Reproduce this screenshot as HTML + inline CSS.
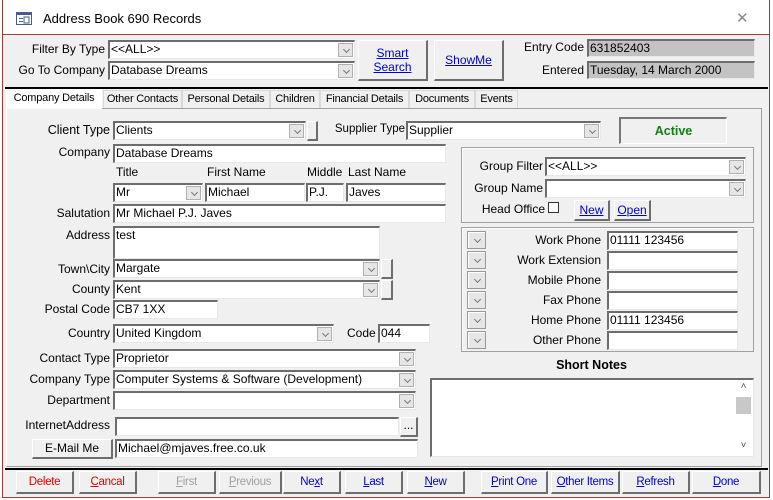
<!DOCTYPE html>
<html><head><meta charset="utf-8"><style>
*{box-sizing:border-box;margin:0;padding:0}
body{width:773px;height:500px;background:#fff;font-family:"Liberation Sans",sans-serif;font-size:12px;color:#000;position:relative;overflow:hidden}
.win{position:absolute;left:2px;top:0;width:768px;height:498px;border:1px solid #a33a3a;border-top:none;background:#f0f0f0}
.tb{position:absolute;left:0;top:0;width:766px;height:35px;background:#fff;border-bottom:1px solid #a33a3a}
.a{position:absolute}
.l{position:absolute;white-space:nowrap;text-align:right}
.f{position:absolute;background:#fff;border-top:2px solid #6d6d6d;border-left:2px solid #6d6d6d;border-bottom:1px solid #e8e8e8;border-right:1px solid #e8e8e8;padding-left:1px;line-height:15px;white-space:nowrap;overflow:hidden}
.g{background:#c3c3c3}
.dd{position:absolute;right:1px;top:1px;width:15px;height:14px;background:#e6e6e6;border:1px solid #b0b0b0}
.dd::after,.pb::after{content:"";position:absolute;left:5px;top:3px;width:4px;height:4px;border-right:1px solid #777;border-bottom:1px solid #777;transform:rotate(45deg)}
.b{position:absolute;background:#f0f0f0;border-top:1px solid #fff;border-left:1px solid #fff;border-right:2px solid #6d6d6d;border-bottom:2px solid #6d6d6d;text-align:center;white-space:nowrap}
.u{color:#00c;text-decoration:underline}
.tab{position:absolute;top:90px;height:18px;border:1px solid #d9d9d9;border-bottom:none;line-height:17px;text-align:center;background:#f0f0f0;white-space:nowrap;font-size:11px;letter-spacing:-0.2px;overflow:hidden}
.box{position:absolute;border:1px solid #a0a0a0;box-shadow:1px 1px 0 #fff inset}
.bt{position:absolute;top:471px;height:23px;background:#f0f0f0;border-top:1px solid #fff;border-left:1px solid #fff;border-right:2px solid #6d6d6d;border-bottom:2px solid #6d6d6d;text-align:center;line-height:20px;color:#00c;font-size:11.5px;letter-spacing:-0.3px;white-space:nowrap}
.pb{position:absolute;left:467px;width:19px;height:18px;background:#e6e6e6;border:1px solid #999;box-shadow:1px 1px 0 #fff inset}
.pb::after{left:7px;top:5px}
</style></head><body>
<div class="win">
<div class="tb">
<svg class="a" style="left:13px;top:12px" width="16" height="13"><rect x="0.5" y="0.5" width="15" height="12" fill="#fff" stroke="#4a5c8c"/><rect x="1" y="1" width="14" height="2" fill="#4a5c8c"/><rect x="3" y="6" width="4" height="1" fill="#4a5c8c"/><rect x="3" y="9" width="4" height="1" fill="#4a5c8c"/><rect x="8" y="5" width="5" height="6" fill="none" stroke="#4a5c8c"/></svg>
<div class="a" style="left:40px;top:11px;font-size:13px">Address Book 690 Records</div>
<div class="a" style="left:733px;top:9px;font-size:15px;color:#888">✕</div>
</div>
</div>
<div class="l" style="left:10px;top:42px;width:95px">Filter By Type</div>
<div class="f" style="left:108px;top:40px;width:247px;height:19px">&lt;&lt;ALL&gt;&gt;<div class="dd"></div></div>
<div class="l" style="left:10px;top:63px;width:95px">Go To Company</div>
<div class="f" style="left:108px;top:61px;width:247px;height:19px">Database Dreams<div class="dd"></div></div>
<div class="b" style="left:358px;top:40px;width:70px;height:41px;padding-top:5px;line-height:14px"><span class="u">Smart<br>Search</span></div>
<div class="b" style="left:434px;top:40px;width:70px;height:41px;line-height:38px"><span class="u">ShowMe</span></div>
<div class="l" style="left:500px;top:40px;width:84px">Entry Code</div>
<div class="f g" style="left:587px;top:39px;width:168px;height:18px">631852403</div>
<div class="l" style="left:500px;top:63px;width:84px">Entered</div>
<div class="f g" style="left:587px;top:61px;width:168px;height:18px">Tuesday, 14 March 2000</div>
<div class="a" style="left:5px;top:87px;width:763px;height:2px;background:#000"></div>

<div class="a" style="left:6px;top:108px;width:756px;height:359px;border:1px solid #a0a0a0;border-left:1px solid #fff"></div>
<div class="tab" style="left:6px;width:96px;background:#fff;top:89px;height:20px;border-color:#fff">Company Details</div>
<div class="tab" style="left:103px;width:79px">Other Contacts</div>
<div class="tab" style="left:182px;width:88px">Personal Details</div>
<div class="tab" style="left:270px;width:50px">Children</div>
<div class="tab" style="left:320px;width:89px">Financial Details</div>
<div class="tab" style="left:409px;width:66px">Documents</div>
<div class="tab" style="left:475px;width:43px">Events</div>

<div class="l" style="left:10px;top:123px;width:100px;font-size:12.5px">Client Type</div>
<div class="f" style="left:113px;top:121px;width:193px;height:19px">Clients<div class="dd"></div></div>
<div class="b" style="left:307px;top:121px;width:11px;height:20px"></div>
<div class="l" style="left:325px;top:123px;width:80px;font-size:11.5px">Supplier Type</div>
<div class="f" style="left:406px;top:121px;width:195px;height:19px">Supplier<div class="dd"></div></div>
<div class="a" style="left:619px;top:117px;width:108px;height:27px;border-top:2px solid #777;border-left:2px solid #777;border-bottom:1px solid #fff;border-right:1px solid #fff;text-align:center;line-height:24px;color:#118011;font-weight:bold;font-size:12.5px">Active</div>

<div class="l" style="left:10px;top:145px;width:100px">Company</div>
<div class="f" style="left:113px;top:144px;width:333px;height:19px">Database Dreams</div>
<div class="a" style="left:116px;top:165px">Title</div>
<div class="a" style="left:207px;top:165px">First Name</div>
<div class="a" style="left:307px;top:165px">Middle</div>
<div class="a" style="left:348px;top:165px">Last Name</div>
<div class="f" style="left:113px;top:183px;width:90px;height:19px">Mr<div class="dd"></div></div>
<div class="f" style="left:205px;top:183px;width:100px;height:19px">Michael</div>
<div class="f" style="left:306px;top:183px;width:38px;height:19px">P.J.</div>
<div class="f" style="left:346px;top:183px;width:100px;height:19px">Javes</div>
<div class="l" style="left:10px;top:206px;width:100px">Salutation</div>
<div class="f" style="left:113px;top:204px;width:333px;height:19px">Mr Michael P.J. Javes</div>
<div class="l" style="left:10px;top:228px;width:100px">Address</div>
<div class="f" style="left:113px;top:226px;width:267px;height:33px">test</div>
<div class="l" style="left:10px;top:262px;width:100px">Town\City</div>
<div class="f" style="left:113px;top:259px;width:267px;height:19px">Margate<div class="dd"></div></div>
<div class="b" style="left:381px;top:259px;width:12px;height:20px"></div>
<div class="l" style="left:10px;top:282px;width:100px">County</div>
<div class="f" style="left:113px;top:280px;width:267px;height:19px">Kent<div class="dd"></div></div>
<div class="b" style="left:381px;top:280px;width:12px;height:20px"></div>
<div class="l" style="left:10px;top:302px;width:100px">Postal Code</div>
<div class="f" style="left:113px;top:300px;width:105px;height:19px">CB7 1XX</div>
<div class="l" style="left:10px;top:326px;width:100px">Country</div>
<div class="f" style="left:113px;top:324px;width:221px;height:19px">United Kingdom<div class="dd"></div></div>
<div class="a" style="left:347px;top:326px">Code</div>
<div class="f" style="left:378px;top:324px;width:52px;height:19px">044</div>
<div class="l" style="left:10px;top:351px;width:100px">Contact Type</div>
<div class="f" style="left:113px;top:349px;width:303px;height:19px">Proprietor<div class="dd"></div></div>
<div class="l" style="left:10px;top:372px;width:100px">Company Type</div>
<div class="f" style="left:113px;top:370px;width:303px;height:19px">Computer Systems &amp; Software (Development)<div class="dd"></div></div>
<div class="l" style="left:10px;top:393px;width:100px">Department</div>
<div class="f" style="left:113px;top:391px;width:303px;height:19px"><div class="dd"></div></div>
<div class="l" style="left:10px;top:418px;width:100px">InternetAddress</div>
<div class="f" style="left:115px;top:417px;width:284px;height:19px"></div>
<div class="b" style="left:400px;top:417px;width:18px;height:20px;line-height:14px">...</div>
<div class="b" style="left:32px;top:439px;width:81px;height:20px;line-height:17px">E-Mail Me</div>
<div class="f" style="left:115px;top:439px;width:303px;height:19px">Michael@mjaves.free.co.uk</div>

<div class="box" style="left:461px;top:147px;width:293px;height:76px"></div>
<div class="l" style="left:460px;top:159px;width:83px">Group Filter</div>
<div class="f" style="left:545px;top:157px;width:201px;height:19px">&lt;&lt;ALL&gt;&gt;<div class="dd"></div></div>
<div class="l" style="left:460px;top:181px;width:83px">Group Name</div>
<div class="f" style="left:545px;top:179px;width:201px;height:19px"><div class="dd"></div></div>
<div class="l" style="left:460px;top:202px;width:85px">Head Office</div>
<div class="a" style="left:548px;top:202px;width:11px;height:11px;border:1px solid #333;background:#fff"></div>
<div class="b" style="left:574px;top:200px;width:36px;height:21px;line-height:18px"><span class="u">New</span></div>
<div class="b" style="left:614px;top:200px;width:37px;height:21px;line-height:18px"><span class="u">Open</span></div>

<div class="box" style="left:461px;top:227px;width:293px;height:125px"></div>
<div class="pb" style="top:231px"></div><div class="l" style="left:490px;top:233px;width:111px">Work Phone</div><div class="f" style="left:607px;top:231px;width:131px;height:19px">01111 123456</div>
<div class="pb" style="top:251px"></div><div class="l" style="left:490px;top:253px;width:111px">Work Extension</div><div class="f" style="left:607px;top:251px;width:131px;height:19px"></div>
<div class="pb" style="top:271px"></div><div class="l" style="left:490px;top:273px;width:111px">Mobile Phone</div><div class="f" style="left:607px;top:271px;width:131px;height:19px"></div>
<div class="pb" style="top:291px"></div><div class="l" style="left:490px;top:293px;width:111px">Fax Phone</div><div class="f" style="left:607px;top:291px;width:131px;height:19px"></div>
<div class="pb" style="top:311px"></div><div class="l" style="left:490px;top:313px;width:111px">Home Phone</div><div class="f" style="left:607px;top:311px;width:131px;height:19px">01111 123456</div>
<div class="pb" style="top:331px"></div><div class="l" style="left:490px;top:333px;width:111px">Other Phone</div><div class="f" style="left:607px;top:331px;width:131px;height:19px"></div>

<div class="a" style="left:430px;top:358px;width:323px;text-align:center;font-weight:bold;font-size:12.5px">Short Notes</div>
<div class="f" style="left:430px;top:378px;width:324px;height:79px"></div>
<div class="a" style="left:735px;top:381px;width:17px;text-align:center;font-size:10px;color:#555">˄</div>
<div class="a" style="left:736px;top:397px;width:15px;height:17px;background:#c8c8c8"></div>
<div class="a" style="left:735px;top:440px;width:17px;text-align:center;font-size:10px;color:#555">˅</div>

<div class="a" style="left:5px;top:468px;width:763px;height:2px;background:#000"></div>
<div class="bt" style="left:16px;width:58px;color:#e00000">Delete</div>
<div class="bt" style="left:79px;width:58px;color:#e00000"><u>C</u>ancal</div>
<div class="bt" style="left:158px;width:58px;color:#a0a0a0"><u>F</u>irst</div>
<div class="bt" style="left:219px;width:63px;color:#a0a0a0"><u>P</u>revious</div>
<div class="bt" style="left:283px;width:58px">Ne<u>x</u>t</div>
<div class="bt" style="left:345px;width:58px"><u>L</u>ast</div>
<div class="bt" style="left:407px;width:58px"><u>N</u>ew</div>
<div class="bt" style="left:481px;width:67px"><u>P</u>rint One</div>
<div class="bt" style="left:551px;width:69px"><u>O</u>ther Items</div>
<div class="bt" style="left:622px;width:68px"><u>R</u>efresh</div>
<div class="bt" style="left:692px;width:69px"><u>D</u>one</div>
</body></html>
